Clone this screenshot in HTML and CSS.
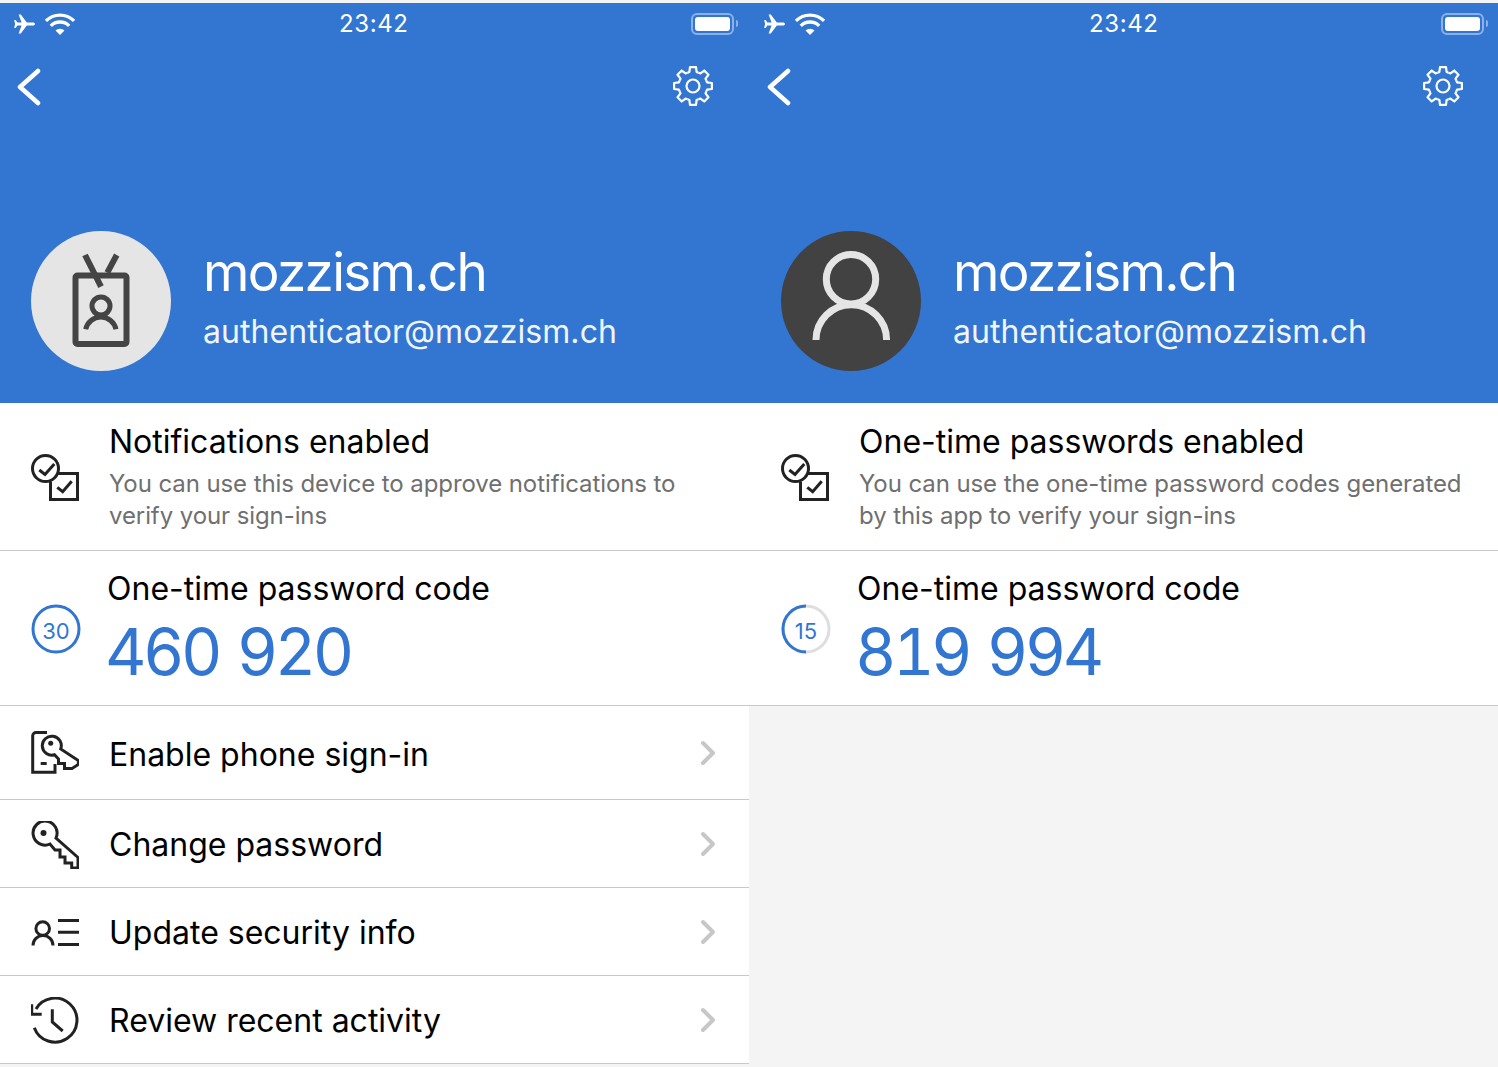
FILE: index.html
```html
<!DOCTYPE html>
<html lang="en">
<head>
<meta charset="utf-8">
<title>Authenticator</title>
<link rel="stylesheet" href="styles.css">
</head>
<body>
<svg class="defs" width="0" height="0" aria-hidden="true">
  <defs>
    <symbol id="plane" viewBox="0 0 22 20"><path d="M21 10c0-.9-1-1.5-2-1.5h-6.2L6.8.5H4.6l3 8H3.4L1.6 6H.2l.9 4-.9 4h1.4l1.8-2.500h4.200l-3 8h2.200l6-8H19c1 0 2-.6 2-1.500z" fill="#fff"/></symbol>
    <symbol id="wifi" viewBox="-15 -22 30 22"><g fill="none" stroke="#fff" stroke-width="3.300"><path d="M-14.100-14.100A20 20 0 0 1 14.100-14.100"/><path d="M-9.200-9.200A13 13 0 0 1 9.200-9.200"/></g><path d="M0 0L-4.500-4.500A6.400 6.400 0 0 1 4.500-4.500z" fill="#fff"/></symbol>
    <symbol id="back" viewBox="0 0 24 38"><path d="M21 3L3 19L21 35" fill="none" stroke="#fff" stroke-width="4.500" stroke-linecap="round" stroke-linejoin="round"/></symbol>
    <path id="tooth" d="M-5.500-13.300L-3.600-14.100L-3-18.900H3L3.600-14.100L5.500-13.300"/>
    <symbol id="gear" viewBox="-20 -20 40 40"><g fill="none" stroke="#fff" stroke-width="2.200" stroke-linejoin="round">
      <use href="#tooth"/><use href="#tooth" transform="rotate(45)"/><use href="#tooth" transform="rotate(90)"/><use href="#tooth" transform="rotate(135)"/><use href="#tooth" transform="rotate(180)"/><use href="#tooth" transform="rotate(225)"/><use href="#tooth" transform="rotate(270)"/><use href="#tooth" transform="rotate(315)"/>
      <circle r="6.500"/></g></symbol>
    <symbol id="checks" viewBox="0 0 48 48"><g fill="none" stroke="#222" stroke-width="3"><circle cx="14.500" cy="14.500" r="13"/><path d="M26 19.500H46.500V45.500H19.500V28"/><path d="M8.300 16L14 20.500L23.300 10"/><path d="M26.300 33.300L31.700 37.700L40.700 27.300"/></g></symbol>
    <symbol id="chev" viewBox="0 0 16 26"><path d="M3 3L13 13L3 23" fill="none" stroke="#c7c7c7" stroke-width="4" stroke-linecap="round" stroke-linejoin="round"/></symbol>
  </defs>
</svg>
<main class="screen">
  <section class="panel panel-a">
    <header class="head">
      <div class="status">
        <div class="status-left"><svg class="i-plane"><use href="#plane"/></svg><svg class="i-wifi"><use href="#wifi"/></svg></div>
        <div class="time">23:42</div>
        <div class="battery"><div class="battery-shell"><div class="battery-fill"></div></div><div class="battery-nub"></div></div>
      </div>
      <div class="nav"><svg class="i-back"><use href="#back"/></svg><svg class="i-gear"><use href="#gear"/></svg></div>
      <div class="profile">
        <div class="avatar avatar-light">
          <svg viewBox="0 0 140 140" width="140" height="140"><g fill="none" stroke="#444" stroke-width="6" stroke-linejoin="round"><rect x="44.500" y="44.500" width="51" height="68.500" rx="2"/><path d="M54 24L70 55.700"/><path d="M85.700 24L76.300 41.700"/><g stroke-width="5"><circle cx="70" cy="75" r="9"/><path d="M54.700 98.300A15.500 15.500 0 0 1 85 98.300"/></g></g></svg>
        </div>
        <div class="who"><div class="org">mozzism.ch</div><div class="mail">authenticator@mozzism.ch</div></div>
      </div>
    </header>
    <div class="row-state">
      <svg class="i-48"><use href="#checks"/></svg>
      <div class="state-text"><div class="t-main">Notifications enabled</div><div class="t-sub">You can use this device to approve notifications to verify your sign-ins</div></div>
    </div>
    <div class="row-code">
      <svg class="timer" viewBox="0 0 50 50"><circle cx="25" cy="25" r="23" fill="none" stroke="#3276d2" stroke-width="3"/><text x="25" y="35" class="timer-num" text-anchor="middle">30</text></svg>
      <div class="code-text"><div class="t-main">One-time password code</div><div class="code">460 920</div></div>
    </div>
    <a class="row-link row-first">
      <svg class="i-48" viewBox="0 0 48 48"><g fill="none" stroke="#222" stroke-width="3"><path d="M16 1.500H5A3.300 3.300 0 0 0 1.700 4.800V41.300H24V33"/><path d="M9.700 32.500H15.700"/><path d="M29.700 18A9.500 9.500 0 1 0 23.500 23.800L27.500 28V32.500H33.500V37.500H41L47.300 33.500V29.500z"/></g><circle cx="19.700" cy="12.300" r="2.500" fill="#222"/></svg>
      <span class="link-label">Enable phone sign-in</span>
      <svg class="i-chev"><use href="#chev"/></svg>
    </a>
    <a class="row-link">
      <svg class="i-48" viewBox="0 0 48 48"><path d="M25 17A12 12 0 1 0 19 23L24 29H29V36H34V42H40.700V47H47V36.500z" fill="none" stroke="#222" stroke-width="3"/><circle cx="12.500" cy="12" r="3" fill="#222"/></svg>
      <span class="link-label">Change password</span>
      <svg class="i-chev"><use href="#chev"/></svg>
    </a>
    <a class="row-link">
      <svg class="i-48" viewBox="0 0 48 48"><g fill="none" stroke="#222" stroke-width="3"><circle cx="11.700" cy="19.500" r="6.800"/><path d="M2 36.500A10 10 0 0 1 22 36.500"/><path d="M27 11.500H48M27 23.200H48M27 35.500H48"/></g></svg>
      <span class="link-label">Update security info</span>
      <svg class="i-chev"><use href="#chev"/></svg>
    </a>
    <a class="row-link">
      <svg class="i-48" viewBox="0 0 48 48"><g fill="none" stroke="#222" stroke-width="3"><path d="M5 12A22 22 0 1 1 3.300 30.700"/><path d="M.7 7.300V17.300H10.700"/><path d="M21.300 12.300V25L31.700 34"/></g></svg>
      <span class="link-label">Review recent activity</span>
      <svg class="i-chev"><use href="#chev"/></svg>
    </a>
  </section>
  <section class="panel panel-b">
    <header class="head">
      <div class="status">
        <div class="status-left"><svg class="i-plane"><use href="#plane"/></svg><svg class="i-wifi"><use href="#wifi"/></svg></div>
        <div class="time">23:42</div>
        <div class="battery"><div class="battery-shell"><div class="battery-fill"></div></div><div class="battery-nub"></div></div>
      </div>
      <div class="nav"><svg class="i-back"><use href="#back"/></svg><svg class="i-gear"><use href="#gear"/></svg></div>
      <div class="profile">
        <div class="avatar avatar-dark">
          <svg viewBox="0 0 140 140" width="140" height="140"><g fill="none" stroke="#e5e5e5" stroke-width="7"><circle cx="70" cy="48.300" r="24.700"/><path d="M35 109A35.300 35.300 0 0 1 105.600 109"/></g></svg>
        </div>
        <div class="who"><div class="org">mozzism.ch</div><div class="mail">authenticator@mozzism.ch</div></div>
      </div>
    </header>
    <div class="row-state">
      <svg class="i-48"><use href="#checks"/></svg>
      <div class="state-text"><div class="t-main">One-time passwords enabled</div><div class="t-sub">You can use the one-time password codes generated by this app to verify your sign-ins</div></div>
    </div>
    <div class="row-code">
      <svg class="timer" viewBox="0 0 50 50"><circle cx="25" cy="25" r="23" fill="none" stroke="#dedede" stroke-width="3"/><path d="M25 2A23 23 0 0 0 25 48" fill="none" stroke="#3276d2" stroke-width="3"/><text x="25" y="35" class="timer-num" text-anchor="middle">15</text></svg>
      <div class="code-text"><div class="t-main">One-time password code</div><div class="code">819 994</div></div>
    </div>
  </section>
</main>
</body>
</html>
```
FILE: styles.css
```css
* { box-sizing: border-box; }
html, body { margin: 0; padding: 0; background: #f4f4f4; }
body { width: 1498px; height: 1067px; overflow: hidden; font-family: Inter, "Liberation Sans", sans-serif; color: #000; }
.defs { position: absolute; }
.screen { display: flex; padding-top: 3px; }
.panel { flex: none; }
.panel-a { width: 750px; }
.panel-b { width: 748px; }
.head { height: 400px; background: #3376d2; color: #fff; }
.status { height: 41px; display: grid; grid-template-columns: 325px auto 1fr; align-items: center; padding: 0 12px 0 14px; }
.panel-b .status { padding-right: 10px; }
.status-left { display: flex; align-items: center; gap: 9px; }
.i-plane { width: 22px; height: 20px; }
.i-wifi { width: 30px; height: 22px; }
.time { font-size: 24px; letter-spacing: .6px; line-height: 41px; }
.battery { display: flex; align-items: center; justify-content: flex-end; gap: 2px; }
.battery-shell { width: 43px; height: 22px; border: 2px solid #8cb1e6; border-radius: 6px; padding: 2px; }
.battery-fill { height: 100%; background: #fff; border-radius: 3px; }
.battery-nub { width: 2px; height: 7px; background: #8cb1e6; border-radius: 0 2px 2px 0; }
.nav { display: flex; justify-content: space-between; align-items: center; height: 40px; margin-top: 23px; padding: 0 37px 0 17px; }
.panel-b .nav { padding-right: 35px; }
.i-back { width: 24px; height: 38px; }
.i-gear { width: 40px; height: 40px; margin-bottom: 2px; }
.profile { display: flex; align-items: center; gap: 32px; margin-top: 124px; padding-left: 31px; }
.avatar { width: 140px; height: 140px; border-radius: 50%; flex: none; }
.avatar svg { display: block; }
.avatar-light { background: #e5e5e5; }
.avatar-dark { background: #424242; }
.who { display: flex; flex-direction: column; margin-top: -10px; }
.org { font-size: 53px; line-height: 62px; letter-spacing: -1.7px; }
.mail { font-size: 32px; line-height: 40px; margin-top: 9px; color: #f0f5fc; letter-spacing: .08px; }
.row-state { height: 148px; background: #fff; border-bottom: 1px solid #c8c8c8; display: flex; padding: 21px 30px 0 31px; gap: 30px; }
.row-state .i-48 { margin-top: 30px; }
.i-48 { width: 48px; height: 48px; flex: none; }
.t-main { font-size: 32px; line-height: 36px; }
.t-sub { font-size: 24px; line-height: 32px; color: #6f6f6f; margin-top: 8px; letter-spacing: -.09px; }
.state-text { flex: 1; }
.row-code { height: 155px; background: #fff; border-bottom: 1px solid #c8c8c8; display: flex; align-items: flex-start; padding: 20px 0 0 31px; gap: 26px; }
.timer { width: 50px; height: 50px; flex: none; margin-top: 33px; }
.timer-num { font-family: Inter, sans-serif; font-size: 22px; fill: #3276d2; }
.code { font-size: 64px; line-height: 72px; color: #3276d2; margin: 9px 0 0 -2px; font-variant-numeric: tabular-nums; letter-spacing: -3.5px; word-spacing: 4px; }
.row-link { height: 88px; margin-right: 1px; background: #fff; border-bottom: 1px solid #c8c8c8; display: flex; align-items: center; padding: 0 33px 0 31px; gap: 30px; }
.row-first { height: 94px; }
.row-link .i-48 { margin-top: 2px; }
.row-link.row-first .i-48 { margin-top: 4px; }
.link-label { flex: 1; font-size: 32px; line-height: 36px; padding-top: 2px; }
.row-first .link-label { padding-top: 4px; }
.i-chev { width: 16px; height: 26px; flex: none; }
```
